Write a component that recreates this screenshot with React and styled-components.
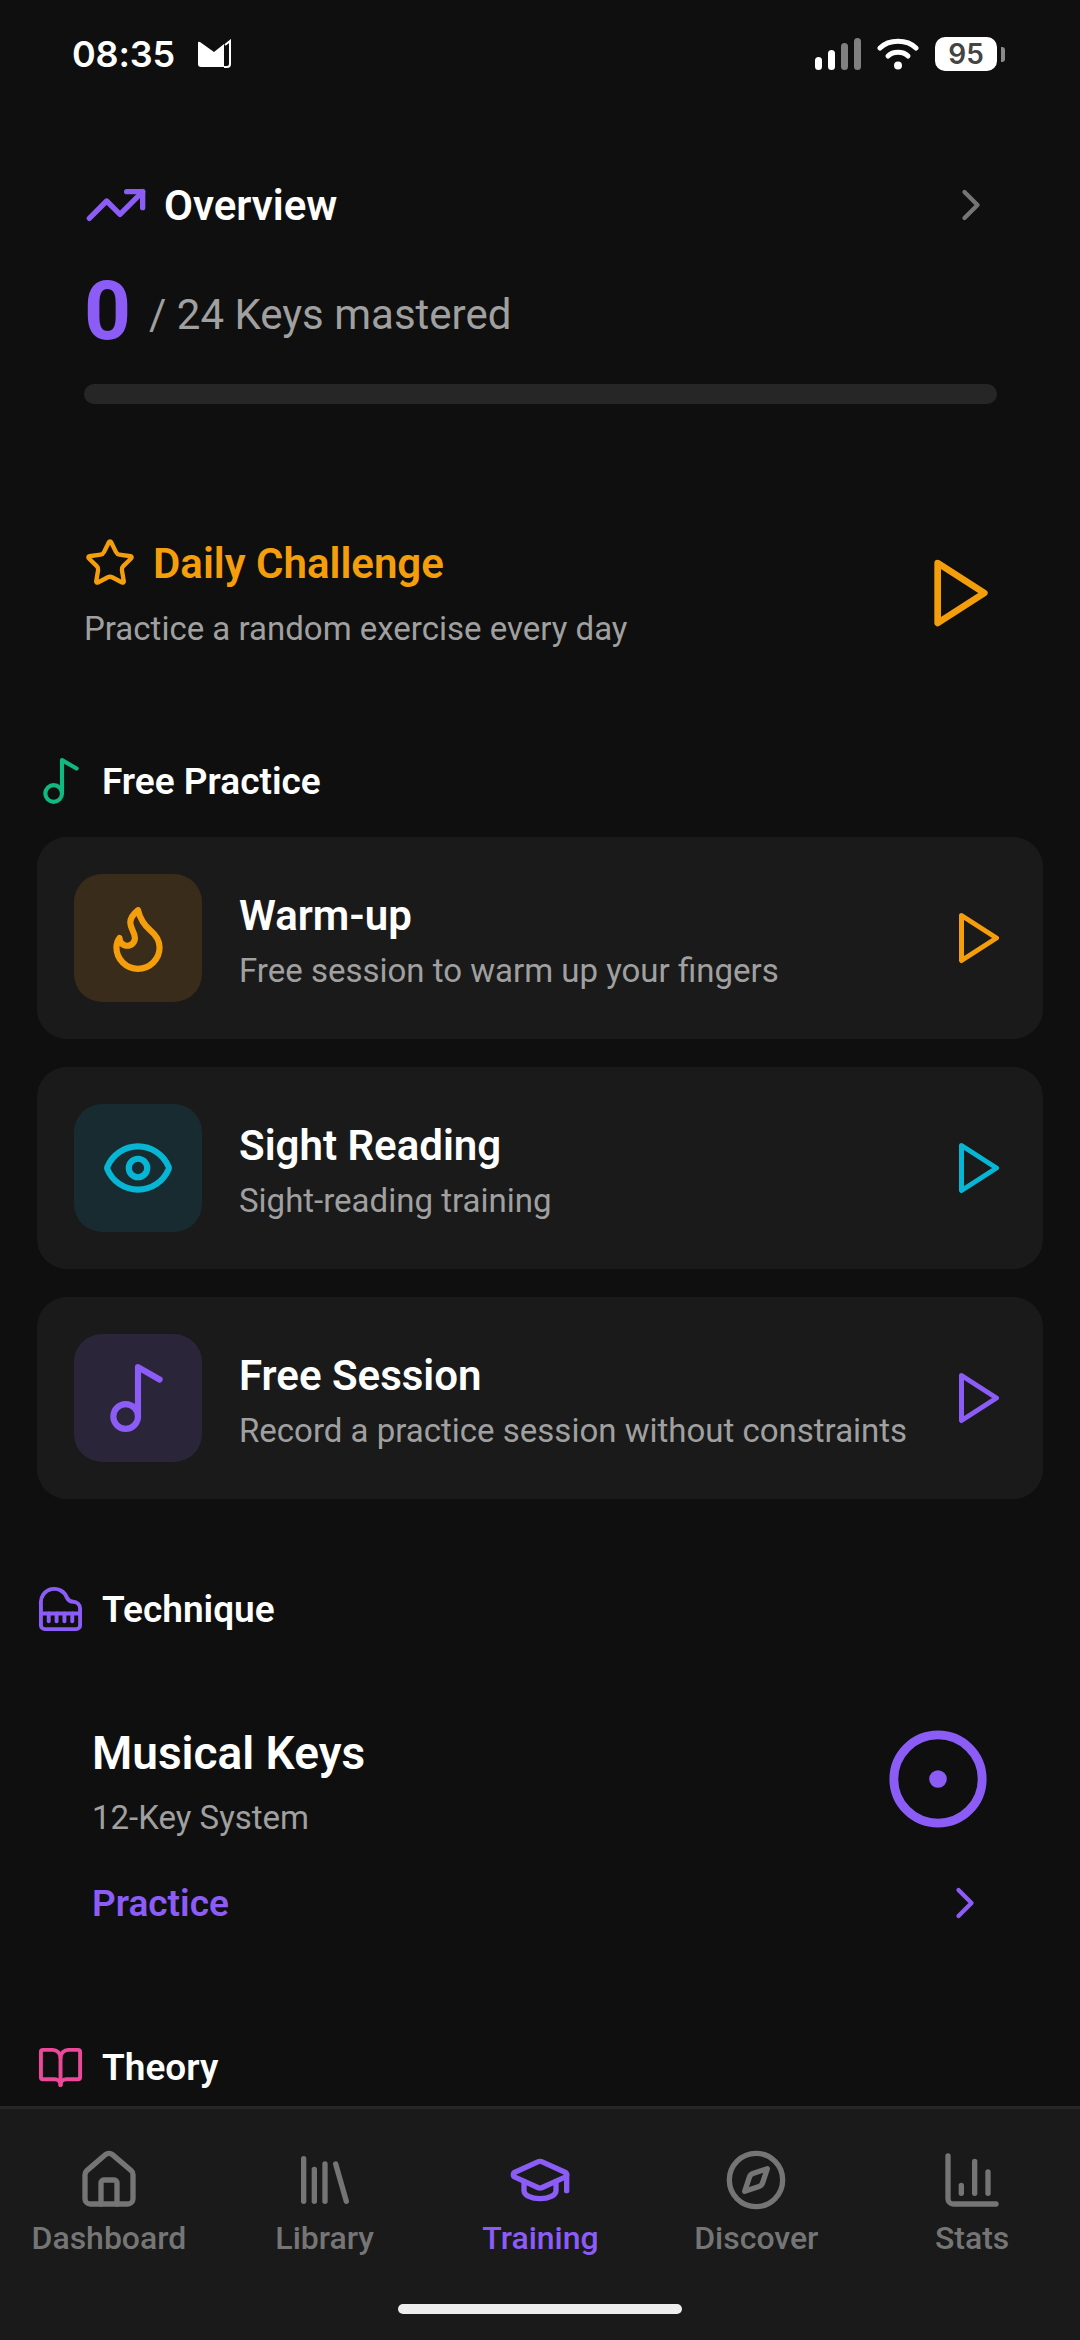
import React from 'react';
import styled, { createGlobalStyle } from 'styled-components';
import {
    TrendingUp, ChevronRight, Star, Music2, Flame, Eye, Piano, CircleDot,
    BookOpen, House, Library, GraduationCap, Compass, ChartColumn,
} from 'lucide-react';

const PURPLE = '#8b5cf6';
const AMBER = '#f59e0b';
const CYAN = '#06b6d4';
const GREEN = '#10b981';
const PINK = '#ec4899';

const GlobalStyle = createGlobalStyle`
    html, body { margin: 0; padding: 0; background: #0f0f0f; }
    * { box-sizing: border-box; }
`;

const Page = styled.div`
    width: 1080px;
    height: 2340px;
    display: flex;
    flex-direction: column;
    overflow: hidden;
    background: #0f0f0f;
    font-family: Roboto, "Noto Sans", sans-serif;
    color: #fff;
`;

const StatusBar = styled.div`
    flex: none;
    height: 108px;
    padding: 0 75px 0 72px;
    display: flex;
    align-items: center;
    justify-content: space-between;
`;
const StatusLeft = styled.div`
    display: flex;
    align-items: center;
    gap: 22px;
`;
const Clock = styled.span`
    font-family: Inter, sans-serif;
    font-size: 36px;
    font-weight: 600;
    letter-spacing: -0.2px;
`;
const StatusRight = styled.div`
    display: flex;
    align-items: center;
    gap: 16px;
`;
const Battery = styled.div`
    display: flex;
    align-items: center;
    gap: 4px;
`;
const BatteryBody = styled.span`
    width: 62px;
    height: 34px;
    border-radius: 10px;
    background: #fff;
    color: #444;
    font-family: Inter, sans-serif;
    font-size: 28px;
    font-weight: 600;
    display: flex;
    align-items: center;
    justify-content: center;
`;
const BatteryCap = styled.span`
    width: 4px;
    height: 15px;
    border-radius: 0 3px 3px 0;
    background: #8a8a8a;
`;

const Content = styled.main`
    flex: 1;
    min-height: 0;
    overflow: hidden;
    padding: 0 37px;
`;

const Overview = styled.section`
    padding: 71px 46px 0 47px;
`;
const OverviewHead = styled.div`
    display: flex;
    align-items: center;
    justify-content: space-between;
    height: 52px;
`;
const HeadLeft = styled.div`
    display: flex;
    align-items: center;
    gap: ${({ $gap }) => $gap}px;
`;
const OverviewTitle = styled.h2`
    margin: 0;
    font-size: 42px;
    font-weight: 600;
`;
const Mastered = styled.div`
    margin-top: 30px;
    display: flex;
    align-items: center;
    gap: 18px;
`;
const BigCount = styled.span`
    font-size: 82px;
    font-weight: 700;
    color: ${PURPLE};
    line-height: 100px;
`;
const MasteredText = styled.span`
    margin-top: 6px;
    font-size: 42px;
    color: #a0a0a0;
`;
const Track = styled.div`
    margin-top: 23px;
    height: 20px;
    border-radius: 10px;
    background: #262626;
`;

const Daily = styled.section`
    margin-top: 133px;
    padding: 0 42px 0 47px;
    display: flex;
    align-items: center;
    justify-content: space-between;
`;
const DailyTitle = styled.h2`
    margin: 0;
    font-size: 42px;
    font-weight: 600;
    color: ${AMBER};
`;
const DailySub = styled.p`
    margin: 20px 0 0;
    font-size: 33px;
    color: #a0a0a0;
`;

const SectionHead = styled.div`
    display: flex;
    align-items: center;
    gap: ${({ $gap }) => $gap}px;
    height: 50px;
    margin-top: ${({ $top }) => $top}px;
`;
const SectionTitle = styled.h3`
    margin: 0;
    font-size: 37px;
    font-weight: 600;
`;

const Cards = styled.div`
    margin-top: 31px;
    display: flex;
    flex-direction: column;
    gap: 28px;
`;
const Card = styled.div`
    height: 202px;
    padding: 0 34px 0 37px;
    border-radius: 30px;
    background: #1a1a1a;
    display: flex;
    align-items: center;
    gap: 37px;
`;
const IconBox = styled.div`
    flex: none;
    width: 128px;
    height: 128px;
    border-radius: 28px;
    display: flex;
    align-items: center;
    justify-content: center;
    background: ${({ $bg }) => $bg};
    color: ${({ $color }) => $color};
`;
const CardBody = styled.div`
    flex: 1;
    min-width: 0;
    padding-top: 6px;
`;
const CardTitle = styled.div`
    font-size: 42px;
    font-weight: 600;
    line-height: 50px;
`;
const CardSub = styled.div`
    margin-top: 10px;
    font-size: 33px;
    line-height: 40px;
    color: #a0a0a0;
    white-space: nowrap;
`;

const KeysBlock = styled.section`
    margin-top: 92px;
    padding: 0 52px 0 55px;
`;
const KeysTop = styled.div`
    display: flex;
    align-items: center;
    justify-content: space-between;
`;
const KeysTitle = styled.div`
    font-size: 46px;
    font-weight: 600;
    line-height: 54px;
`;
const KeysSub = styled.div`
    margin-top: 18px;
    font-size: 33px;
    line-height: 40px;
    color: #a0a0a0;
`;
const Ring = styled(CircleDot)`
    margin-bottom: 6px;
`;
const PracticeRow = styled.div`
    margin-top: 39px;
    display: flex;
    align-items: center;
    justify-content: space-between;
    color: ${PURPLE};
    font-size: 37px;
    font-weight: 600;
`;

const Nav = styled.nav`
    flex: none;
    position: relative;
    height: 234px;
    background: #1a1a1a;
    border-top: 3px solid #262626;
    display: flex;
    padding: 39px 0 0 1px;
`;
const NavItem = styled.div`
    flex: 1;
    display: flex;
    flex-direction: column;
    align-items: center;
    gap: 7px;
    color: ${({ $active }) => ($active ? PURPLE : '#757575')};
    font-size: 32px;
    font-weight: 500;
`;
const HomeBar = styled.div`
    position: absolute;
    left: 398px;
    bottom: 26px;
    width: 284px;
    height: 10px;
    border-radius: 5px;
    background: #eee;
`;

const free = [
    { title: 'Warm-up', sub: 'Free session to warm up your fingers', color: AMBER, bg: '#3a2c1a', Icon: Flame },
    { title: 'Sight Reading', sub: 'Sight-reading training', color: CYAN, bg: '#182b30', Icon: Eye },
    { title: 'Free Session', sub: 'Record a practice session without constraints', color: PURPLE, bg: '#2a2538', Icon: Music2 },
];

const tabs = [
    { label: 'Dashboard', Icon: House },
    { label: 'Library', Icon: Library },
    { label: 'Training', Icon: GraduationCap, active: true },
    { label: 'Discover', Icon: Compass },
    { label: 'Stats', Icon: ChartColumn },
];

// the sharp outlined triangle, lucide's current Play is too rounded
const PlayIcon = ({ size, color }) => (
    <svg width={size} height={size} viewBox="0 0 24 24" fill="none" stroke={color} strokeWidth="2" strokeLinejoin="round" strokeLinecap="round">
        <polygon points="5 3 19 12 5 21 5 3" />
    </svg>
);

const MailIcon = () => (
    <svg width="36" height="30" viewBox="0 0 36 30">
        <path d="M1 4 Q1 2 3 3 L17 13 L27 5 V28 H4 Q1 28 1 25 Z" fill="#fff" />
        <path d="M28 6 L33 2 V25 Q33 28 30 28 H27" fill="none" stroke="#fff" strokeWidth="2" />
    </svg>
);

const Signal = () => (
    <svg width="46" height="32" viewBox="0 0 46 32">
        <rect x="0" y="19" width="7" height="13" rx="3.5" fill="#fff" />
        <rect x="13" y="12" width="7" height="20" rx="3.5" fill="#fff" />
        <rect x="26" y="5" width="7" height="27" rx="3.5" fill="#808080" />
        <rect x="39" y="0" width="7" height="32" rx="3.5" fill="#808080" />
    </svg>
);

const Wifi = () => (
    <svg width="42" height="32" viewBox="0 0 42 32" fill="none" stroke="#fff" strokeWidth="5" strokeLinecap="round">
        <path d="M3 10 C12 1 30 1 39 10" />
        <path d="M11 18 C16 13 26 13 31 18" />
        <circle cx="21" cy="27.5" r="4" fill="#fff" stroke="none" />
    </svg>
);

const App = () => (
    <Page>
        <GlobalStyle />
        <StatusBar>
            <StatusLeft>
                <Clock>08:35</Clock>
                <MailIcon />
            </StatusLeft>
            <StatusRight>
                <Signal />
                <Wifi />
                <Battery>
                    <BatteryBody>95</BatteryBody>
                    <BatteryCap />
                </Battery>
            </StatusRight>
        </StatusBar>

        <Content>
            <Overview>
                <OverviewHead>
                    <HeadLeft $gap={16}>
                        <TrendingUp size={64} color={PURPLE} strokeWidth={2} />
                        <OverviewTitle>Overview</OverviewTitle>
                    </HeadLeft>
                    <ChevronRight size={52} color="#757575" strokeWidth={2} />
                </OverviewHead>
                <Mastered>
                    <BigCount>0</BigCount>
                    <MasteredText>/ 24 Keys mastered</MasteredText>
                </Mastered>
                <Track />
            </Overview>

            <Daily>
                <div>
                    <HeadLeft $gap={17}>
                        <Star size={52} color={AMBER} strokeWidth={2} />
                        <DailyTitle>Daily Challenge</DailyTitle>
                    </HeadLeft>
                    <DailySub>Practice a random exercise every day</DailySub>
                </div>
                <PlayIcon size={80} color={AMBER} />
            </Daily>

            <SectionHead $top={108} $gap={15}>
                <Music2 size={50} color={GREEN} strokeWidth={2} />
                <SectionTitle>Free Practice</SectionTitle>
            </SectionHead>

            <Cards>
                {free.map(({ title, sub, color, bg, Icon }) => (
                    <Card key={title}>
                        <IconBox $bg={bg} $color={color}><Icon size={74} strokeWidth={2} /></IconBox>
                        <CardBody>
                            <CardTitle>{title}</CardTitle>
                            <CardSub>{sub}</CardSub>
                        </CardBody>
                        <PlayIcon size={60} color={color} />
                    </Card>
                ))}
            </Cards>

            <SectionHead $top={85} $gap={18}>
                <Piano size={47} color={PURPLE} strokeWidth={2} />
                <SectionTitle>Technique</SectionTitle>
            </SectionHead>

            <KeysBlock>
                <KeysTop>
                    <div>
                        <KeysTitle>Musical Keys</KeysTitle>
                        <KeysSub>12-Key System</KeysSub>
                    </div>
                    <Ring size={106} color={PURPLE} strokeWidth={2} />
                </KeysTop>
                <PracticeRow>
                    Practice
                    <ChevronRight size={52} strokeWidth={2} />
                </PracticeRow>
            </KeysBlock>

            <SectionHead $top={113} $gap={18}>
                <BookOpen size={47} color={PINK} strokeWidth={2} />
                <SectionTitle>Theory</SectionTitle>
            </SectionHead>
        </Content>

        <Nav>
            {tabs.map(({ label, Icon, active }) => (
                <NavItem key={label} $active={active}>
                    <Icon size={64} strokeWidth={2} />
                    {label}
                </NavItem>
            ))}
            <HomeBar />
        </Nav>
    </Page>
);

export default App;
